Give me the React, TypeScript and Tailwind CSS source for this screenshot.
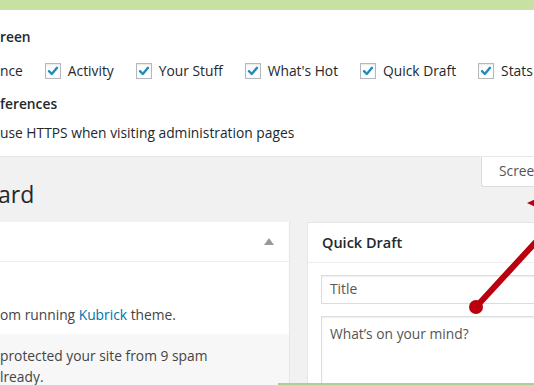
import React from "react";

const font = { fontFamily: '"Open Sans", "Noto Sans", sans-serif' };

function Check() {
  return (
    <span className="w-4 h-4 shrink-0 flex items-center justify-center bg-white border border-[#b4b9be] shadow-[inset_0_1px_2px_rgba(0,0,0,0.1)]">
      <svg width="12" height="12" viewBox="0 0 12 12">
        <path d="M2 6.2 L4.8 9 L10 2.8" fill="none" stroke="#1e8cbe" strokeWidth="2.4" strokeLinecap="round" strokeLinejoin="round" />
      </svg>
    </span>
  );
}

const boxes = ["Activity", "Your Stuff", "What's Hot", "Quick Draft", "Stats"];

export default function App() {
  return (
    <div
      className="relative w-[534px] h-[385px] overflow-hidden bg-[#f1f1f1] text-[13.8px] text-[#444]"
      style={font}
    >
      {/* top notice bar */}
      <div className="h-[10px] bg-[#c6e1a1]" />

      {/* Screen options panel */}
      <div className="h-[147px] bg-white pt-[17px] border-b border-[#e8e8e8]">
        <div className="leading-5 font-semibold text-[#23282d]">reen</div>
        <div className="mt-[14px] flex items-center gap-[22px] leading-5 whitespace-nowrap">
          <span className="text-[#23282d]">nce</span>
          {boxes.map((b) => (
            <span key={b} className="flex items-center gap-[7px] text-[#23282d]">
              <Check />
              {b}
            </span>
          ))}
        </div>
        <div className="mt-[13px] leading-5 font-semibold text-[#23282d]">ferences</div>
        <div className="mt-[9px] leading-5 text-[#23282d]">use HTTPS when visiting administration pages</div>
      </div>

      {/* Dashboard area */}
      <div className="relative">
        <div className="absolute right-0 top-0 w-[53px] h-[30px] bg-white border-l border-b border-[#ddd] rounded-bl-[3px] pl-[17px] pt-[4px] leading-5 text-[#555] whitespace-nowrap">
          Screen Options
        </div>
        <h1 className="pt-[22px] h-[65px] text-[23px] leading-[30px] text-[#23282d] -ml-[2px]">ard</h1>

        <div className="flex gap-[17px]">
          {/* left box */}
          <div className="w-[290px] shrink-0 bg-white border-r border-[#e5e5e5]">
            <div className="h-[40px] flex items-center justify-end pr-[15px] border-b border-[#eee]">
              <svg width="10" height="7" viewBox="0 0 10 7">
                <path d="M0 7 L5 0 L10 7 Z" fill="#999" />
              </svg>
            </div>
            <div className="h-[72px] pt-[43px] leading-5 whitespace-nowrap">
              om running <span className="text-[#0073aa]">Kubrick</span> theme.
            </div>
            <div className="bg-[#f7f7f7] h-[60px] pt-[11px] leading-[21px] whitespace-nowrap">
              <div>protected your site from 9 spam</div>
              <div>lready.</div>
            </div>
          </div>

          {/* right box */}
          <div className="flex-1 bg-white border-l border-t border-[#e5e5e5] min-w-[240px]">
            <div className="h-[40px] flex items-center pl-[14px] border-b border-[#eee] text-[14.5px] font-semibold text-[#23282d]">
              Quick Draft
            </div>
            <div className="pl-[13px] pt-[12px]">
              <div className="h-[29px] border border-[#ddd] shadow-[inset_0_1px_2px_rgba(0,0,0,0.07)] pl-[8px] flex items-center text-[#555]">
                Title
              </div>
              <div className="mt-[12px] h-[80px] border border-[#ddd] shadow-[inset_0_1px_2px_rgba(0,0,0,0.07)] pl-[8px] pt-[7px] leading-5 text-[#555]">
                What’s on your mind?
              </div>
            </div>
          </div>
        </div>
      </div>

      {/* green underline */}
      <div className="absolute left-[278px] right-0 top-[383px] h-[2px] bg-[#a9d28f]" />

      {/* red annotation arrow */}
      <svg className="absolute inset-0 pointer-events-none" width="534" height="385" viewBox="0 0 534 385">
        <line x1="476" y1="307" x2="545" y2="232" stroke="#b8000e" strokeWidth="6" strokeLinecap="round" />
        <circle cx="476" cy="307" r="7" fill="#b8000e" />
        <path d="M527 203 L538 198 L538 208 Z" fill="#b8000e" />
      </svg>
    </div>
  );
}
